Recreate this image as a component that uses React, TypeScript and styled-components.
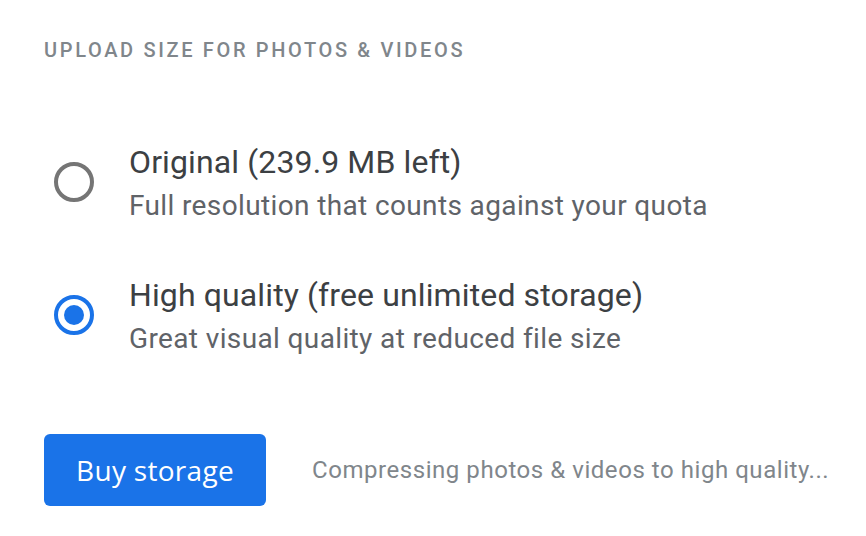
import styled, { createGlobalStyle } from 'styled-components';

const GlobalStyle = createGlobalStyle`
  body {
    margin: 0;
    background: #fff;
    font-family: Roboto, "Liberation Sans", Arial, sans-serif;
  }
`;

const Page = styled.div`
  padding: 38px 0 0 44px;
`;

const Heading = styled.h2`
  margin: 0;
  font-size: 20px;
  font-weight: 500;
  letter-spacing: 2.65px;
  color: #80868b;
  line-height: 24px;
`;

const Options = styled.div`
  display: flex;
  flex-direction: column;
  gap: 51px;
  margin-top: 80px;
`;

const Option = styled.label`
  display: flex;
  align-items: center;
  gap: 35px;
  padding-left: 10px;
  cursor: pointer;
`;

const Radio = styled.span<{ $checked?: boolean }>`
  box-sizing: border-box;
  width: 40px;
  height: 40px;
  margin-top: -3px;
  border-radius: 50%;
  border: 4px solid ${(p) => (p.$checked ? '#1a73e8' : '#757575')};
  display: flex;
  align-items: center;
  justify-content: center;
  flex-shrink: 0;
  &::after {
    content: '';
    width: 20px;
    height: 20px;
    border-radius: 50%;
    background: #1a73e8;
    display: ${(p) => (p.$checked ? 'block' : 'none')};
  }
`;

const Texts = styled.div`
  display: flex;
  flex-direction: column;
  gap: 6px;
`;

const Title = styled.div`
  font-size: 32px;
  line-height: 40px;
  letter-spacing: 0.12px;
  color: #3c4043;
`;

const Subtitle = styled.div`
  font-size: 28px;
  line-height: 36px;
  letter-spacing: 0.37px;
  color: #5f6368;
`;

const Footer = styled.div`
  display: flex;
  align-items: center;
  gap: 46px;
  margin-top: 77px;
`;

const BuyButton = styled.button`
  flex-shrink: 0;
  width: 222px;
  height: 72px;
  padding: 0;
  border: none;
  border-radius: 6px;
  background: #1a73e8;
  color: #fff;
  font-family: "Open Sans", Roboto, sans-serif;
  font-size: 28px;
  font-weight: 500;
  letter-spacing: 0.3px;
  cursor: pointer;
`;

const Status = styled.span`
  font-size: 24px;
  color: #80868b;
  letter-spacing: 0.55px;
  white-space: nowrap;
`;

export default function App() {
  return (
    <>
      <GlobalStyle />
      <Page>
        <Heading>UPLOAD SIZE FOR PHOTOS &amp; VIDEOS</Heading>
        <Options>
          <Option>
            <Radio />
            <Texts>
              <Title>Original (239.9 MB left)</Title>
              <Subtitle>Full resolution that counts against your quota</Subtitle>
            </Texts>
          </Option>
          <Option>
            <Radio $checked />
            <Texts>
              <Title>High quality (free unlimited storage)</Title>
              <Subtitle>Great visual quality at reduced file size</Subtitle>
            </Texts>
          </Option>
        </Options>
        <Footer>
          <BuyButton>Buy storage</BuyButton>
          <Status>Compressing photos &amp; videos to high quality...</Status>
        </Footer>
      </Page>
    </>
  );
}
